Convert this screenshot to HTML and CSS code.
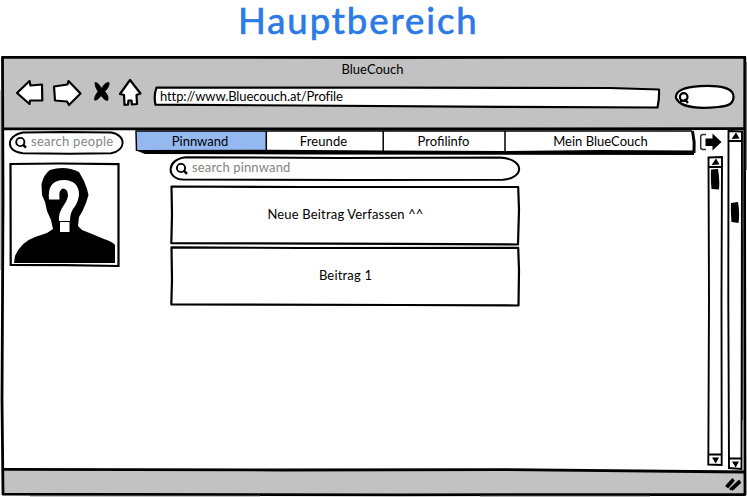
FILE: index.html
```html
<!DOCTYPE html>
<html lang="de">
<head>
<meta charset="utf-8">
<title>BlueCouch</title>
<link rel="stylesheet" href="styles.css">
</head>
<body>
<h1 class="heading">Hauptbereich</h1>
<div class="window">
  <svg class="frame" viewBox="0 56 747 441" fill="none" stroke="#000" stroke-linejoin="round">
    <path fill="#c2c2c2" stroke="none" d="M3 58H745V129H3ZM3 470H745V495H3Z"/>
    <path stroke-width="2.8" d="M2.5 57.300L400 57.500L744.800 57.200L744.600 200L745 494.500L400 494.800L3 494.200L2 400L3 200Z"/>
    <path stroke-width="2.8" d="M3 128.800L300 129L744 128.700M3 469.400L280 470L500 469.600L744 472"/>
    <path stroke="#444" stroke-width="1" d="M1.200 90V270M746.200 62V170M742.300 230V420M30 495.800H260M480 495.900H650"/>
  </svg>
  <div class="chrome">
    <header class="header">
      <div class="window-title">BlueCouch</div>
      <div class="toolbar">
        <svg class="nav back" viewBox="15 78 30 30"><path d="M17 93L29.500 81L30.500 85.500L42 84.500L42.300 100.500L30 100.500L29.500 104Z"/></svg>
        <svg class="nav forward" viewBox="52 78 30 30"><path d="M54 86.500L67.500 84.500L68.500 81L80.500 93.500L69 105L67 101.500L55 100.500Z"/></svg>
        <svg class="nav stop" viewBox="92 78 20 30"><path d="M95 82.500Q98 82 101.500 88.500Q105 82 109 82.500Q110 86 104.800 91.500Q109.500 97 107.500 100.500Q105 101 101 95.500Q97 101 94.500 100Q94 97 98 91.500Q94.500 86 95 82.500Z"/></svg>
        <svg class="nav home" viewBox="118 78 25 30"><path d="M130 80L120 94L124 95L124.500 105L128 104.500L128.500 100.500L131.500 100.500L132 104.500L137 104L136.500 95L140.500 93.500Z"/></svg>
        <div class="address">
          <svg class="frame" viewBox="153 85 508 24"><path fill="#fff" stroke="#000" stroke-width="2.200" stroke-linejoin="round" d="M156.500 87.500L400 87.700L610 88L659 89.500Q659.500 98 657.500 107.500L500 106.800L300 105.500L155.500 104.700Q153.500 96 156.500 87.500Z"/></svg>
          <span class="url">http://www.Bluecouch.at/Profile</span>
        </div>
        <svg class="lookup" viewBox="674 84 62 26" fill="none" stroke="#000"><path fill="#fff" stroke-width="2.200" d="M676 98C675 91 684 87 700 86.200C722 85 733 89 733.500 96C734 103 730 106 718 107C704 108.500 681 109 676 98Z"/><circle cx="683.700" cy="97" r="3.800" stroke-width="2.200"/><path stroke-width="2.200" d="M684.500 99L688 103M680 101H686"/></svg>
      </div>
    </header>
    <div class="content">
      <aside class="sidebar">
        <label class="search people">
          <svg class="frame" viewBox="8 130 117 26" fill="none" stroke="#000"><path fill="#fff" stroke-width="1.900" d="M23 132.500L65 132L111 132.500C127 135 126 151 111 153.200L70 153.800L23 153.200C6 152 5 136 23 132.500Z"/><circle cx="20.300" cy="142" r="4.100" stroke-width="1.900"/><path stroke-width="2.500" d="M23 144.600L26 147.600"/></svg>
          <span class="hint">search people</span>
        </label>
        <svg class="photo" viewBox="8 161 113 107" fill="none" stroke="#000"><path fill="#fff" stroke-width="2.200" d="M10.500 164L60 163.500L118.500 164.200L118.500 266L65 265.200L10.700 264.800Z"/><path fill="#000" stroke="none" d="M14 263L15 256Q21 242 35 237L47 233L53 229L51 220L47 211L45 202L42 195L41.500 184Q44 174 50 170Q65 165 79 172L84 181L87 189L88.500 195L86 203L82.500 211L79 217L78 226L82 230L92 234L104 239Q113 242 115 245V263Z"/><path fill="#fff" stroke="none" d="M49 199.500Q47 180 64 180Q79 180.500 79 195Q78 203 73 209Q70 214 70 221H59Q58 213 64 205Q68 199 68 195Q67.500 188.500 63 188.500Q58.500 189 59.500 199.500ZM60 222H69.500V232H60Z"/></svg>
      </aside>
      <main class="main">
        <div class="top">
          <nav class="tabs">
            <svg class="frame" viewBox="135 129 562 28"><path fill="#fff" d="M137 131H692V151H137Z"/><path fill="#94b9f1" d="M137 131H266V150H137Z"/><path d="M137 150L270 149.800L385 150.500L505 151L600 150L694 150.500V155L505 154.700L300 154.500L145 154L136 150.500Z"/><path fill="none" stroke="#000" stroke-width="1.500" d="M136.500 151L136 131H692M266.300 131V151M383.200 131V152M505 131V154"/><path fill="none" stroke="#000" stroke-width="3" d="M692.500 131Q695 142 694 153"/></svg>
            <ul class="tab-list">
              <li class="tab pinnwand">Pinnwand</li>
              <li class="tab freunde">Freunde</li>
              <li class="tab profil">Profilinfo</li>
              <li class="tab mein">Mein BlueCouch</li>
            </ul>
          </nav>
          <svg class="exit" viewBox="698 131 25 22"><path fill="none" stroke="#332e2e" stroke-width="1.500" d="M706 134.500H703Q700.700 134.500 700.700 137V147Q700.700 149.500 703 149.500H706"/><path d="M705.500 138.500H712.500V133.500L721.500 142L712.500 150.500V146H705.500Z"/></svg>
        </div>
        <div class="lower">
          <section class="feed">
            <label class="search wall">
              <svg class="frame" viewBox="169 155 352 28" fill="none" stroke="#000"><path fill="#fefefe" stroke-width="2" d="M186 157.200L340 158L500 157.500C525 159 525 178 503 179.800L350 180L183 179.600C166 179 166 159 186 157.200Z"/><circle cx="181" cy="168" r="4.100" stroke-width="1.900"/><path stroke-width="2.500" d="M184 170.800L187 173.800"/></svg>
              <span class="hint">search pinnwand</span>
            </label>
            <article class="card">
              <svg class="frame" viewBox="169 185 352 61"><path fill="#fff" stroke="#000" stroke-width="2.200" stroke-linejoin="round" d="M171.500 186.500L300 187L518.200 187L519 210L518 244.500L400 243.800L171.300 243.200L172 215Z"/></svg>
              <span class="post">Neue Beitrag Verfassen ^^</span>
            </article>
            <article class="card">
              <svg class="frame" viewBox="169 246 352 61"><path fill="#fff" stroke="#000" stroke-width="2.200" stroke-linejoin="round" d="M171.500 247.300L300 248L518.200 247.800L519 270L518.500 305.500L400 305L171.300 304.500L172 280Z"/></svg>
              <span class="post">Beitrag 1</span>
            </article>
          </section>
          <svg class="scroll inner" viewBox="706 155 19 313" fill="none" stroke="#000" stroke-width="1.900"><path fill="#fff" d="M708.500 157.500L722 157L721.500 300L721.700 465L708.300 464.500L709 300Z"/><path d="M708.500 167H722M708 454.500H722"/><path fill="#000" stroke="none" d="M711.500 165L716 158.500L719.500 164.500ZM712 457.500H719L715.700 463.500ZM711 169.500L718 169Q720 180 719 189.500L711.500 189Q710.500 180 711 169.500Z"/></svg>
        </div>
      </main>
      <svg class="scroll outer" viewBox="726 129 19 342" fill="none" stroke="#000" stroke-width="1.900"><path fill="#fff" d="M728.500 131L742 131.500L741.800 300L741.500 469L729 468L728.300 300Z"/><path d="M728.500 141H742M728.500 458.500H742"/><path fill="#000" stroke="none" d="M731.500 139L736 132.500L739.500 138.500ZM732 461.500H739L735.700 467.500ZM731 203L738 202Q740 213 738.500 223L731.500 222Q730.500 212 731 203Z"/></svg>
    </div>
    <footer class="status">
      <svg class="grip" viewBox="724 476 20 16"><path fill="none" stroke="#000" stroke-width="2.200" stroke-linecap="round" d="M726.500 486L732.500 479.500M728 487L733.500 480.500M730.500 489L739 481M732.500 489.500L740 482.500"/></svg>
    </footer>
  </div>
</div>
</body>
</html>
```

FILE: styles.css
```css
* { box-sizing: border-box; }
body {
  margin: 0;
  width: 747px;
  height: 497px;
  overflow: hidden;
  background: #fff;
  color: #000;
  font: 13px/16px Lato, "Liberation Sans", sans-serif;
}
svg { display: block; }
.heading {
  margin: 0;
  height: 56px;
  padding-left: 238px;
  font-size: 36.5px;
  font-weight: 400;
  line-height: 40px;
  letter-spacing: 1.95px;
  color: #2c7ae6;
  -webkit-text-stroke: 0.7px #2c7ae6;
}
.window, .address, .search, .tabs, .card { display: grid; }
.window > *, .address > *, .search > *, .tabs > *, .card > * { grid-area: 1 / 1; }
.frame { width: 100%; height: 100%; }
.window { height: 441px; }
.chrome { display: flex; flex-direction: column; }
.header { height: 73px; padding-top: 5px; }
.window-title { height: 17px; padding-right: 2px; text-align: center; }
.toolbar { display: flex; padding-left: 15px; }
.nav { height: 30px; fill: #fff; stroke: #000; stroke-width: 2.2; stroke-linejoin: round; }
.back { width: 30px; margin-right: 7px; }
.forward { width: 30px; margin-right: 10px; }
.stop { width: 20px; margin-right: 6px; fill: #000; stroke-width: 0.8; }
.home { width: 25px; margin-right: 10px; }
.address { width: 508px; height: 24px; margin: 7px 13px 0 0; }
.url { padding: 3px 0 0 7px; letter-spacing: -0.1px; }
.lookup { width: 62px; height: 26px; margin-top: 6px; }
.content { display: flex; height: 342px; padding-left: 8px; }
.sidebar { width: 127px; padding-top: 1px; }
.people { width: 117px; height: 26px; margin-bottom: 5px; }
.people .hint { padding: 3px 0 0 23px; letter-spacing: 0.27px; }
.hint { color: #858585; }
.photo { width: 113px; height: 107px; }
.main { width: 591px; }
.top { display: flex; height: 26px; }
.tabs { width: 562px; height: 28px; }
.exit { width: 25px; height: 22px; margin: 2px 0 0 1px; }
.tab-list { display: flex; margin: 0; padding: 4px 0 0; list-style: none; text-align: center; }
.pinnwand { width: 130px; }
.freunde { width: 117px; letter-spacing: 0.1px; }
.profil { width: 123px; }
.mein { width: 191px; }
.lower { display: flex; padding-left: 34px; }
.feed { width: 352px; margin-right: 185px; }
.wall { height: 28px; margin-bottom: 2px; }
.wall .hint { padding: 4px 0 0 23px; letter-spacing: 0.15px; }
.card { height: 61px; place-items: center; }
.post { padding: 0 0 3px 1px; letter-spacing: 0.17px; }
.scroll.inner { width: 19px; height: 313px; }
.scroll.outer { width: 19px; height: 342px; }
.status { display: flex; justify-content: flex-end; height: 26px; padding: 5px 3px 0 0; }
.grip { width: 20px; height: 16px; }
```
